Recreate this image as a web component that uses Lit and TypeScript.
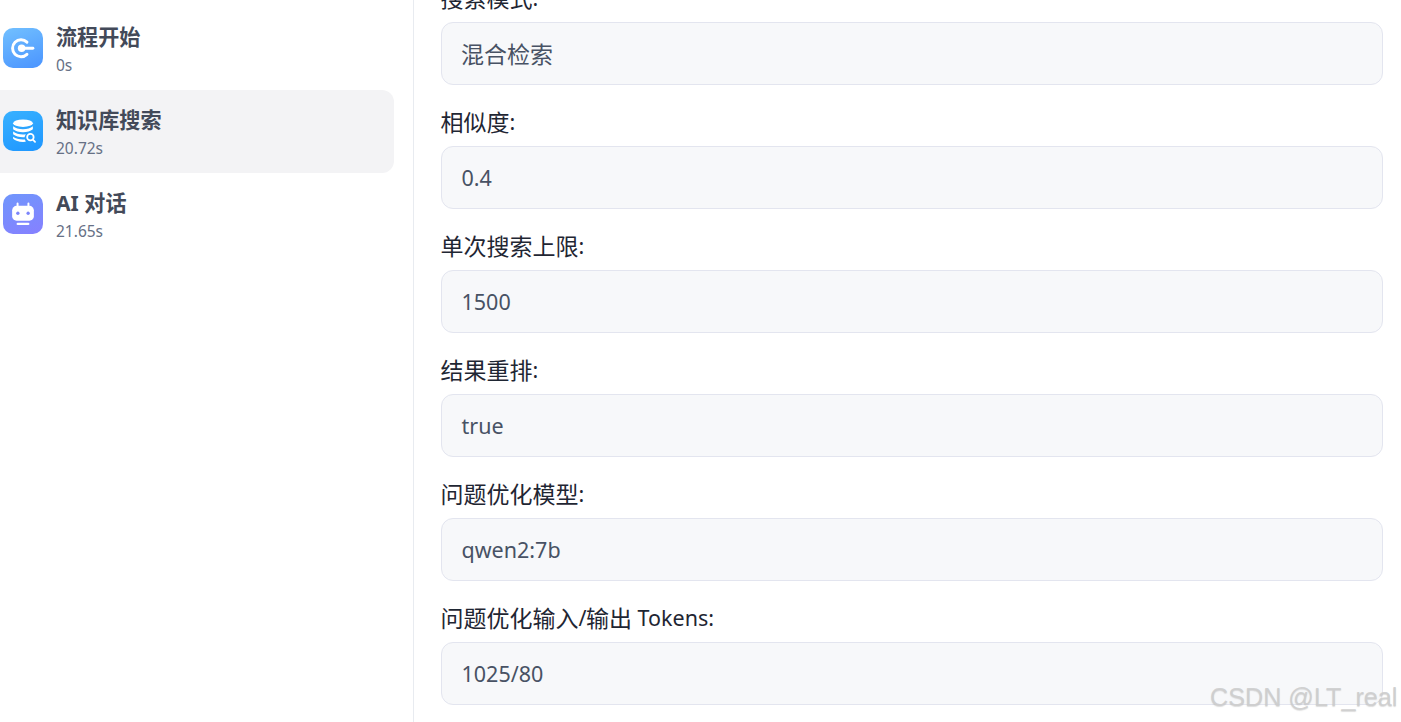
import { LitElement, html, css, svg } from "lit";
import { customElement } from "lit/decorators.js";

const startIcon = svg`<path d="M24 14.300a8.600 8.600 0 1 0 0 12.400" fill="none" stroke="#fff" stroke-width="3" stroke-linecap="round"/><circle cx="18.600" cy="20.500" r="3.800" fill="#fff"/><rect x="19" y="19" width="12.500" height="3" rx="1.500" fill="#fff"/>`;
const dbIcon = svg`<ellipse cx="20" cy="12.300" rx="10" ry="3.800" fill="#fff"/><path d="M10 15.400c2.200 2 5.800 3 10 3s7.800-1 10-3v3c-2.400 2.100-6 3-10 3s-7.600-.9-10-3z" fill="#fff"/><path d="M10 20.800c2.400 2 6 3 10 3 1 0 2-.1 2.900-.2a6.500 6.500 0 0 0-1.300 3h-1.600c-4 0-7.600-.9-10-3z" fill="#fff"/><path d="M10 26.200c2.400 1.800 6 2.700 10 2.700l2 -.1.800 2.400-2.800.2c-4.400 0-8-1.200-10-3.200z" fill="#fff"/><circle cx="27.500" cy="26.500" r="3.300" fill="none" stroke="#fff" stroke-width="1.800"/><path d="M30 29l2.200 2.200" stroke="#fff" stroke-width="1.800" stroke-linecap="round"/>`;
const botIcon = svg`<path d="M14.500 9.500v3M25.500 9.500v3" stroke="#fff" stroke-width="2" stroke-linecap="round"/><rect x="9" y="12" width="22" height="15" rx="4.500" fill="#fff"/><circle cx="14.800" cy="19.500" r="1.700" fill="#7c85fb"/><circle cx="25.200" cy="19.500" r="1.700" fill="#7c85fb"/><rect x="13.500" y="29.200" width="13" height="2.200" rx="1.100" fill="#fff"/>`;

const steps = [
  { name: "流程开始", time: "0s", icon: startIcon, grad: "linear-gradient(160deg,#72c0ff,#4a94ff)", active: false },
  { name: "知识库搜索", time: "20.72s", icon: dbIcon, grad: "linear-gradient(160deg,#38b1ff,#1e96ff)", active: true },
  { name: "AI 对话", time: "21.65s", icon: botIcon, grad: "linear-gradient(160deg,#7096fc,#8680ff)", active: false },
];

const fields = [
  ["搜索模式:", "混合检索"],
  ["相似度:", "0.4"],
  ["单次搜索上限:", "1500"],
  ["结果重排:", "true"],
  ["问题优化模型:", "qwen2:7b"],
  ["问题优化输入/输出 Tokens:", "1025/80"],
];

/* CJK runs are set a little larger than Latin runs, as in the reference's font pairing. */
const runs = (text: string) =>
  text.split(/([\u4e00-\u9fff]+)/).filter(Boolean).map((part) =>
    /[\u4e00-\u9fff]/.test(part) ? html`<span class="cjk">${part}</span>` : part
  );

@customElement("app-root")
export class AppRoot extends LitElement {
  static styles = css`
    :host {
      display: block;
      position: relative;
      width: 1401px;
      height: 722px;
      overflow: hidden;
      background: #fff;
      font-family: "Noto Sans", "Noto Sans CJK SC", sans-serif;
    }
    .page {
      display: flex;
      height: 722px;
    }
    .side {
      box-sizing: border-box;
      width: 414px;
      flex: none;
      border-right: 1px solid #e8ebf0;
      padding: 7px 19px 0 0;
      display: flex;
      flex-direction: column;
    }
    .step {
      display: flex;
      align-items: center;
      gap: 13px;
      height: 83px;
      padding-left: 3px;
      border-radius: 0 12px 12px 0;
    }
    .step.active {
      background: #f3f3f5;
    }
    .icon {
      width: 40px;
      height: 39.500px;
      margin-top: -1px;
      flex: none;
      display: block;
      border-radius: 10px;
    }
    .name {
      font-size: 21.100px;
      font-weight: 700;
      line-height: 30px;
      color: #434a59;
    }
    .time {
      font-size: 15.500px;
      line-height: 24px;
      padding-top: 1px;
      margin-bottom: -1px;
      color: #667085;
    }
    .main {
      flex: 1;
      min-width: 0;
      padding: 0 18px 0 27px;
      margin-top: -16px;
    }
    .field {
      height: 124px;
    }
    .label {
      box-sizing: border-box;
      height: 38px;
      padding-bottom: 12px;
      display: flex;
      align-items: center;
      font-size: 21.500px;
      color: #1f2633;
      white-space: pre;
    }
    .value {
      box-sizing: border-box;
      height: 63px;
      display: flex;
      align-items: center;
      padding: 0 19.500px;
      font-size: 21.500px;
      color: #485264;
      background: #f7f8fa;
      border: 1px solid #e3e5ef;
      border-radius: 12px;
    }
    .cjk {
      font-size: 23px;
    }
    .label .cjk {
      margin-left: -0.500px;
    }
    .value .cjk {
      margin-left: -0.500px;
      margin-top: -2px;
    }
    .mark {
      position: absolute;
      left: 1210px;
      top: 680px;
      font-family: "Liberation Sans", sans-serif;
      font-size: 25.200px;
      line-height: 34px;
      color: rgba(205, 205, 205, 0.9);
      text-shadow: 0 1px 1px rgba(120, 120, 120, 0.25);
      white-space: nowrap;
    }
  `;

  render() {
    return html`
      <div class="page">
        <aside class="side">
          ${steps.map(
            (s) => html`
              <div class="step ${s.active ? "active" : ""}">
                <svg class="icon" style="background:${s.grad}" viewBox="0 0 40 40">${s.icon}</svg>
                <div>
                  <div class="name">${s.name}</div>
                  <div class="time">${s.time}</div>
                </div>
              </div>
            `
          )}
        </aside>
        <main class="main">
          ${fields.map(
            ([l, v]) => html`
              <div class="field">
                <div class="label">${runs(l)}</div>
                <div class="value">${runs(v)}</div>
              </div>
            `
          )}
        </main>
      </div>
      <div class="mark">CSDN @LT_real</div>
    `;
  }
}
